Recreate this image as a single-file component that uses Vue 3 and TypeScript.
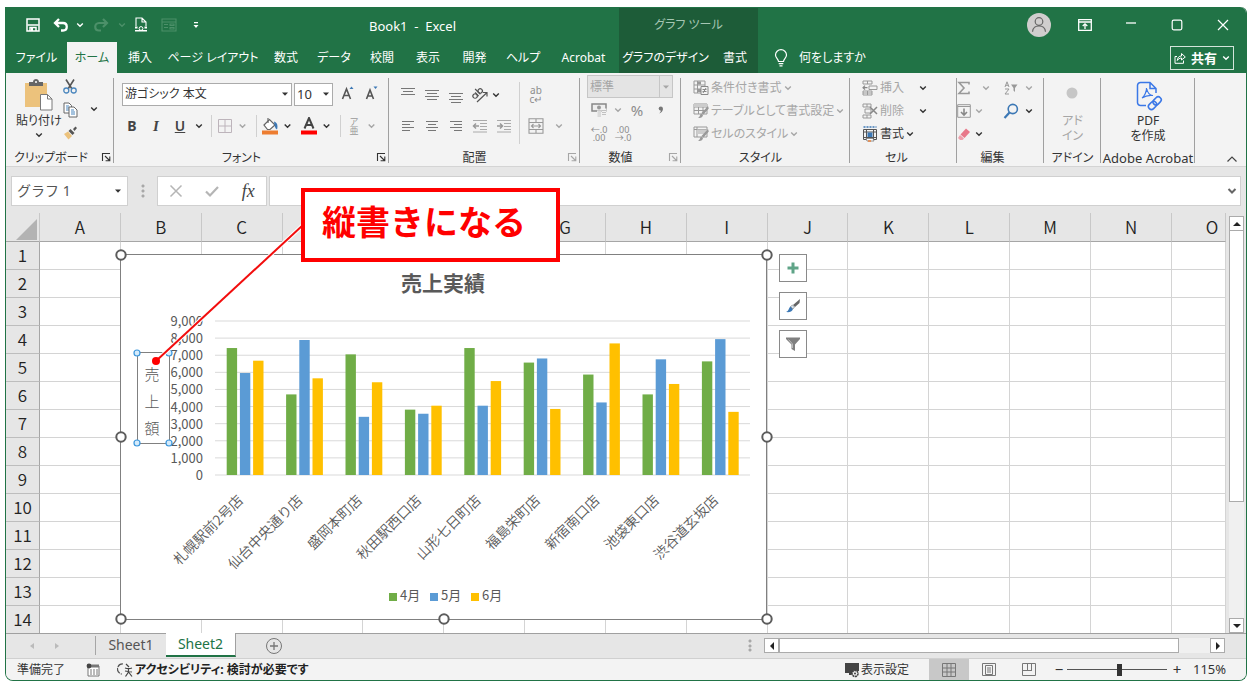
<script setup lang="ts">
import { ref } from 'vue'

interface Store {
  name: string
  values: number[]
}

const tabs = ['ファイル', 'ホーム', '挿入', 'ページ レイアウト', '数式', 'データ', '校閲', '表示', '開発', 'ヘルプ', 'Acrobat']
const contextTabs = ['グラフのデザイン', '書式']
const activeTab = ref('ホーム')

const columns = ['A', 'B', 'C', 'D', 'E', 'F', 'G', 'H', 'I', 'J', 'K', 'L', 'M', 'N', 'O']
// Columns whose letters sit under the callout
const coveredColumns = ['D', 'E', 'F']
const rowCount = 14

const stores: Store[] = [
  { name: '札幌駅前2号店', values: [7420, 5960, 6680] },
  { name: '仙台中央通り店', values: [4710, 7890, 5650] },
  { name: '盛岡本町店', values: [7050, 3400, 5420] },
  { name: '秋田駅西口店', values: [3820, 3580, 4050] },
  { name: '山形七日町店', values: [7420, 4050, 5490] },
  { name: '福島栄町店', values: [6570, 6810, 3860] },
  { name: '新宿南口店', values: [5870, 4240, 7690] },
  { name: '池袋東口店', values: [4710, 6760, 5320] },
  { name: '渋谷道玄坂店', values: [6640, 7940, 3690] },
]
const months = [
  { name: '4月', color: '#70ad47' },
  { name: '5月', color: '#5b9bd5' },
  { name: '6月', color: '#ffc000' },
]

const baseY = 475
const topY = 321
const axisMax = 9000
const groupStep = 59.4
const ticks = Array.from({ length: 10 }, (_, i) => i * 1000)
const yOf = (value: number): number => baseY - ((baseY - topY) * value) / axisMax

const frameHandles = [
  [121, 255], [444, 255], [767, 255], [121, 437], [767, 437], [121, 619], [444, 619], [767, 619],
]
const titleHandles = [[137, 353], [169, 353], [137, 443], [169, 443]]
const titleChars = ['売', '上', '額']

const fontName = ref('游ゴシック 本文')
const fontSize = ref('10')
const numberFormat = ref('標準')
const nameBox = ref('グラフ 1')
const formula = ref('')
const zoom = ref(115)
</script>

<template>
  <div class="window">
    <svg class="defs" aria-hidden="true">
      <symbol id="chev" viewBox="0 0 8 6"><path d="M1.2 1.4 4 4.2 6.8 1.4" fill="none" stroke="currentColor" stroke-width="1.4" /></symbol>
      <symbol id="tri" viewBox="0 0 8 6"><path d="M1 1.5h6L4 4.8z" fill="currentColor" /></symbol>
      <symbol id="launch" viewBox="0 0 10 10"><path d="M1.5 9V1.5H9M4 4l4.5 4.5M8.8 4.6v4.2H4.6" fill="none" stroke="currentColor" stroke-width="1.1" /></symbol>
    </svg>

    <header class="header">
      <div class="title-left">
        <div class="quick">
          <button aria-label="上書き保存"><svg width="14" height="14" viewBox="0 0 14 14"><path d="M1 1h12v12H1z" fill="none" stroke="#fff" stroke-width="1.5" /><path d="M1.500 7h11M4 13V9.500h6V13" fill="none" stroke="#fff" stroke-width="1.5" /><path d="M5 10h2v3H5z" fill="#fff" /></svg></button>
          <button aria-label="元に戻す"><svg width="16" height="14" viewBox="0 0 16 14"><path d="M6 1 2 5l4 4M2.4 5H10c5 0 5 7.5 0 7.5H8" fill="none" stroke="#fff" stroke-width="2.3" /></svg></button>
          <svg class="chev mini"><use href="#chev" /></svg>
          <button class="dim" aria-label="やり直し"><svg width="16" height="14" viewBox="0 0 16 14"><path d="m10 1 4 4-4 4M13.6 5H6c-5 0-5 7.5 0 7.5h2" fill="none" stroke="#4c9069" stroke-width="2.2" /></svg></button>
          <svg class="chev mini dim"><use href="#chev" /></svg>
          <button aria-label="印刷プレビュー"><svg width="14" height="16" viewBox="0 0 14 16"><path d="M2 9V1h6l4 4v4M8 1v4h4" fill="none" stroke="#fff" stroke-width="1.1" /><path d="M1 9.5h2.5v2H1zm9.5 0H13v2h-2.5zM1 13h12v1.5H1z" fill="#fff" /><circle cx="7" cy="11.5" r="1.9" fill="none" stroke="#fff" /></svg></button>
          <button class="dim" aria-label="フォーム"><svg width="16" height="14" viewBox="0 0 16 14"><path d="M1 1h14v12H1zM1 4h14M3 6.5h4M3 9.5h4M9 6h4v1.5H9zM9 9.5h4V11H9z" fill="none" stroke="#4c9069" stroke-width="1.1" /></svg></button>
          <button aria-label="クイック アクセスのカスタマイズ"><svg width="8" height="8" viewBox="0 0 8 8"><path d="M2 1h4v1.2H2zM1.500 4h5L4 7z" fill="#fff" /></svg></button>
        </div>
        <h1 class="title">Book1&nbsp; -&nbsp; Excel</h1>
      </div>
      <div class="context-title">グラフ ツール</div>
      <div class="controls">
        <button aria-label="アカウント"><svg width="24" height="24" viewBox="0 0 24 24"><circle cx="12" cy="12" r="12" fill="#d0cece" /><circle cx="12" cy="8.5" r="3.8" fill="none" stroke="#666" stroke-width="1.2" /><path d="M5.500 18.800c.6-8 12.400-8 13 0" fill="none" stroke="#666" stroke-width="1.2" /></svg></button>
        <button aria-label="リボンの表示オプション"><svg width="14" height="12" viewBox="0 0 14 12"><path d="M.7.7h12.600v10.600H.7zM.7 3h12.600M7 10V5M4.700 7 7 4.800 9.300 7" fill="none" stroke="#fff" stroke-width="1.3" /></svg></button>
        <button aria-label="最小化"><svg width="12" height="12" viewBox="0 0 12 12"><path d="M1 4h10" stroke="#fff" stroke-width="1.3" /></svg></button>
        <button aria-label="最大化"><svg width="12" height="12" viewBox="0 0 12 12"><rect x="1.2" y="1.2" width="9.6" height="9.6" rx="1.5" fill="none" stroke="#fff" stroke-width="1.2" /></svg></button>
        <button aria-label="閉じる"><svg width="12" height="12" viewBox="0 0 12 12"><path d="m1 1 10 10M11 1 1 11" stroke="#fff" stroke-width="1.2" /></svg></button>
      </div>

      <nav class="tabs">
        <button v-for="t in tabs" :key="t" :class="{ active: t === activeTab }" @click="activeTab = t">{{ t }}</button>
      </nav>
      <nav class="tabs context">
        <button v-for="t in contextTabs" :key="t" @click="activeTab = t">{{ t }}</button>
      </nav>
      <div class="tell">
        <svg width="14" height="18" viewBox="0 0 14 18"><path d="M4.500 12.500C4.500 10 1.500 9 1.500 6a5.500 5.300 0 0 1 11 0c0 3-3 4-3 6.500zM4.700 14.700h4.600M5.500 16.800h3" fill="none" stroke="#fff" stroke-width="1.2" /></svg>
        <button>何をしますか</button>
        <button class="share">
          <svg width="12" height="12" viewBox="0 0 12 12"><path d="M3 4.500H1v6.800h8.500V8.500M3.300 8.500C3.500 5.500 5 4 7.500 4V1.500L11.300 5 7.500 8V6C5.500 6 4.300 7 3.300 8.500z" fill="none" stroke="#fff" /></svg>
          共有
          <svg class="chev"><use href="#chev" /></svg>
        </button>
      </div>
    </header>

    <section class="ribbon">
      <div class="group clip">
        <div class="body">
          <button class="big">
            <svg width="30" height="32" viewBox="0 0 30 32"><path d="M1 4h22v24H1z" fill="#ecc27c" /><path d="M5 3h4c0-4 6-4 6 0h4v4H5z" fill="#666" /><circle cx="12" cy="3" r="1" fill="#fff" /><path d="M16.500 15.500h7l4.500 4.500v11H16.500z" fill="#fff" stroke="#7a7a7a" /><path d="M23.500 15.500V20H28" fill="none" stroke="#7a7a7a" /></svg>
            <span>貼り付け</span>
            <svg class="chev"><use href="#chev" /></svg>
          </button>
          <div class="stack">
            <button aria-label="切り取り"><svg width="14" height="15" viewBox="0 0 14 15"><path d="m3 .5 6 9.500M11 .5 5 10" stroke="#555" stroke-width="1.6" /><circle cx="3.3" cy="11.5" r="2.5" fill="none" stroke="#4a86bd" stroke-width="1.3" /><circle cx="10.7" cy="11.5" r="2.5" fill="none" stroke="#4a86bd" stroke-width="1.3" /></svg></button>
            <button aria-label="コピー"><svg width="15" height="16" viewBox="0 0 15 16"><path d="M1 1h5l2.500 2.500V11H1z" fill="#fff" stroke="#666" /><path d="M3 4h3M3 6h3M3 8h3" stroke="#4a86bd" /><path d="M6 5h5l3 3v7H6z" fill="#fff" stroke="#666" /><path d="M8 8h3M8 10h4M8 12h4" stroke="#4a86bd" /></svg></button>
            <button aria-label="書式のコピー"><svg width="14" height="14" viewBox="0 0 14 14"><path d="m1 8 4-2.500L9 10l-3.500 3.500z" fill="#ecc27c" /><path d="M5.500 5 7.500 3l4 4-2 2zM10 3l2.500-2.500L14 2l-2.500 3z" fill="#555" /></svg></button>
          </div>
          <svg class="chev copy-chev"><use href="#chev" /></svg>
        </div>
        <div class="label">クリップボード</div>
        <button class="launcher" aria-label="クリップボードの詳細"><svg width="10" height="10"><use href="#launch" /></svg></button>
      </div>

      <div class="group font">
        <div class="row combos">
          <label class="combo name"><select v-model="fontName" aria-label="フォント名"><option>游ゴシック 本文</option></select><svg class="chev"><use href="#tri" /></svg></label>
          <label class="combo size"><select v-model="fontSize" aria-label="フォント サイズ"><option>10</option></select><svg class="chev"><use href="#tri" /></svg></label>
          <button class="i24 grow" aria-label="フォント サイズの拡大"><svg width="14" height="16" viewBox="0 0 14 16"><path d="M1.500 13 5.500 3l4 10M3 9.500h5" fill="none" stroke="#555" stroke-width="1.6" /><path d="m8.500 3 2-2.500 2 2.500z" fill="#3c78b5" /></svg></button>
          <button class="i24" aria-label="フォント サイズの縮小"><svg width="14" height="16" viewBox="0 0 14 16"><path d="M1.500 13 5 4l3.500 9M2.800 10h4.500" fill="none" stroke="#555" stroke-width="1.6" /><path d="m8.500 .5 2 2.500 2-2.500z" fill="#3c78b5" /></svg></button>
        </div>
        <div class="row tools">
          <button class="i24 glyph"><b>B</b></button>
          <button class="i24 glyph serif"><i>I</i></button>
          <button class="i24 glyph"><u>U</u></button>
          <svg class="chev w14"><use href="#chev" /></svg>
          <span class="sep"></span>
          <button class="i18" aria-label="罫線"><svg width="14" height="14" viewBox="0 0 14 14"><path d="M.5.5h13v13H.5zM7 1v12M1 7h12" fill="none" stroke="#bdb4bb" /></svg></button>
          <svg class="chev w17 off"><use href="#chev" /></svg>
          <span class="sep"></span>
          <button class="i18" aria-label="塗りつぶしの色"><svg width="18" height="18" viewBox="0 0 18 18"><path d="m3 8 5.500-5.500L14 8l-5 4.500H6.500z" fill="#fff" stroke="#666" stroke-width="1.2" /><path d="M7 1v5" stroke="#666" stroke-width="1.2" /><path d="M13 4.500c3.500 1 4 4.500 3 8-2-1-2.500-4-3-8z" fill="#3c78b5" /><path d="M1 13.500h16v4H1z" fill="#ed7d31" /></svg></button>
          <svg class="chev w17"><use href="#chev" /></svg>
          <button class="i18 fore" aria-label="フォントの色"><svg width="18" height="18" viewBox="0 0 18 18"><path d="M4.500 11.500 9 1l4.500 10.500M6 8h6" fill="none" stroke="#444" stroke-width="2" /><path d="M1 13.500h16v4H1z" fill="#f00" /></svg></button>
          <svg class="chev w17"><use href="#chev" /></svg>
          <span class="sep"></span>
          <button class="i18 ruby"><span>ア</span><span>亜</span></button>
          <svg class="chev w17 off"><use href="#chev" /></svg>
        </div>
        <div class="label">フォント</div>
        <button class="launcher" aria-label="フォントの詳細"><svg width="10" height="10"><use href="#launch" /></svg></button>
      </div>

      <div class="group align">
        <div class="body">
          <div class="align-grid">
            <button aria-label="上揃え"><svg width="16" height="16" viewBox="0 0 16 16"><path d="M1 1.500h14M3 4.500h10M1 7.500h14" stroke="#777" /></svg></button>
            <button aria-label="上下中央揃え"><svg width="16" height="16" viewBox="0 0 16 16"><path d="M1 3.500h14M3 6.500h10M1 9.500h14M3 12.500h10" stroke="#777" /></svg></button>
            <button aria-label="下揃え"><svg width="16" height="16" viewBox="0 0 16 16"><path d="M1 6.500h14M3 9.500h10M1 12.500h14M3 15.500h10" stroke="#777" /></svg></button>
            <button aria-label="方向"><svg width="16" height="16" viewBox="0 0 16 16"><g transform="rotate(-45 7 8)" fill="none" stroke="#555" stroke-width="1.2"><circle cx="3.5" cy="6" r="2.2" /><path d="M6 3.500v5M8.500 1v7.500" /><circle cx="10.7" cy="6" r="2.2" /></g><path d="M5 15 14.500 6M11 5.500h4v4" fill="none" stroke="#555" stroke-width="1.2" /></svg></button>
            <svg class="chev"><use href="#chev" /></svg>
            <button aria-label="左揃え"><svg width="14" height="14" viewBox="0 0 14 14"><path d="M1 2.500h12M1 5.500h8M1 8.500h12M1 11.500h8" stroke="#777" /></svg></button>
            <button aria-label="中央揃え"><svg width="14" height="14" viewBox="0 0 14 14"><path d="M1 2.500h12M3 5.500h8M1 8.500h12M3 11.500h8" stroke="#777" /></svg></button>
            <button aria-label="右揃え"><svg width="14" height="14" viewBox="0 0 14 14"><path d="M1 2.500h12M5 5.500h8M1 8.500h12M5 11.500h8" stroke="#777" /></svg></button>
            <button aria-label="インデントを減らす"><svg width="16" height="14" viewBox="0 0 16 14"><path d="M1 1.500h14M8 4.500h7M8 7.500h7M8 10.500h7M1 13h14" stroke="#aaa" /><path d="M7 7H1.500M4 4.500 1.500 7 4 9.500" fill="none" stroke="#999" stroke-width="1.5" /></svg></button>
            <button aria-label="インデントを増やす"><svg width="16" height="14" viewBox="0 0 16 14"><path d="M1 1.500h14M8 4.500h7M8 7.500h7M8 10.500h7M1 13h14" stroke="#aaa" /><path d="M1 7h5.500M4 4.500 6.500 7 4 9.500" fill="none" stroke="#999" stroke-width="1.5" /></svg></button>
          </div>
          <div class="wrap-grid">
            <button class="wraptext" aria-label="折り返して全体を表示する"><span>ab</span><span>c↵</span></button>
            <span></span>
            <button aria-label="セルを結合して中央揃え"><svg width="16" height="16" viewBox="0 0 16 16"><path d="M1 .7h14v14.600H1zM1 4.500h14M1 11.500h14M8 .7v3.800M8 11.500v3.800M3.500 8h9M5.500 6 3.500 8l2 2M10.500 6l2 2-2 2" fill="none" stroke="#999" stroke-width="1.1" /></svg></button>
            <svg class="chev off"><use href="#chev" /></svg>
          </div>
        </div>
        <div class="label">配置</div>
        <button class="launcher off" aria-label="配置の詳細"><svg width="10" height="10"><use href="#launch" /></svg></button>
      </div>

      <div class="group number">
        <label class="combo format"><select v-model="numberFormat" disabled aria-label="表示形式"><option>標準</option></select><svg class="chev"><use href="#tri" /></svg></label>
        <div class="row">
          <button class="i24" aria-label="通貨表示形式"><svg width="16" height="16" viewBox="0 0 16 16"><path d="M1 2h14v7H1z" fill="#eee" stroke="#888" stroke-width="1.5" /><circle cx="8" cy="5.5" r="2" fill="#999" /><path d="M6 8.500h4v6H6zM10.500 6.500h5v8h-5z" fill="#f3f3f3" /><path d="M6.500 10h3.500M6.500 12h3.500M6.500 14h3.500M11 8.500h4M11 10.500h4M11 12.500h4" stroke="#c2c2c2" /></svg></button>
          <svg class="chev w14 off"><use href="#chev" /></svg>
          <button class="i24 percent">%</button>
          <button class="i24 comma" aria-label="桁区切りスタイル"><svg width="6" height="8" viewBox="0 0 6 8"><circle cx="2.8" cy="2.6" r="2.1" fill="#777" /><path d="M4.900 2.500C5 5 3.500 6.800 1.200 7.500c1-1 1.700-2 1.800-3.200z" fill="#777" /></svg></button>
        </div>
        <div class="row decimals">
          <button class="i24 dec"><span>←.0</span><span>.00</span></button>
          <button class="i24 dec"><span>.00</span><span>→.0</span></button>
        </div>
        <div class="label">数値</div>
        <button class="launcher off" aria-label="数値の詳細"><svg width="10" height="10"><use href="#launch" /></svg></button>
      </div>

      <div class="group style">
        <div class="list off">
          <button><svg width="16" height="16" viewBox="0 0 16 16"><path d="M1 1h11v12H1zM4.500 1v12M1 5h11M1 9h11" fill="none" stroke="#999" /><path d="M5 1.500h3v3H5zM5 9h4v3H5z" fill="#999" /><path d="M8 6.500h7v8H8z" fill="#f3f3f3" stroke="#888" /><path d="M9.500 9.500h4M9.500 11.500h4M13 8l-3 5" stroke="#888" /></svg>条件付き書式<svg class="chev"><use href="#chev" /></svg></button>
          <button><svg width="16" height="16" viewBox="0 0 16 16"><path d="M1 1h13v10H1zM5.500 1v10M10 1v10M1 4h13M1 7.500h13" fill="none" stroke="#999" /><path d="M1 1h13v3H1z" fill="#ccc" /><path d="m15 3 .8 2.500-5.300 6-2-1.500zM8 10.500l2 1.500c-.5 3-3 3-5 3 2-1 2-3.500 3-4.500z" fill="#999" /></svg>テーブルとして書式設定<svg class="chev"><use href="#chev" /></svg></button>
          <button><svg width="16" height="16" viewBox="0 0 16 16"><path d="M1 1h13v10H1zM1 3.500h13M4 1v10" fill="none" stroke="#999" /><path d="M4 3.500h10V8H4z" fill="#ccc" /><path d="m15 3 .8 2.500-5.300 6-2-1.500zM8 10.500l2 1.500c-.5 3-3 3-5 3 2-1 2-3.500 3-4.500z" fill="#999" /></svg>セルのスタイル<svg class="chev"><use href="#chev" /></svg></button>
        </div>
        <div class="label">スタイル</div>
      </div>

      <div class="group cells">
        <div class="list">
          <button class="off"><svg width="16" height="16" viewBox="0 0 16 16"><path d="M1 1h9v3H1zM1 11h9v4H1zM5.500 1v3M5.500 11v4M1 13h9M7 6h8v3.500H7z" fill="none" stroke="#999" /><path d="M5.500 7.700H1M3 5.700l-2 2 2 2" fill="none" stroke="#888" stroke-width="1.2" /></svg>挿入<svg class="chev far"><use href="#chev" /></svg></button>
          <button class="off"><svg width="16" height="16" viewBox="0 0 16 16"><path d="M1 1h8v3H1zM1 12h8v3H1zM5 1v3M5 12v3M3 6h6v4H3z" fill="none" stroke="#999" /><path d="m8 4 7 7M15 4l-7 7" stroke="#888" stroke-width="1.5" /></svg>削除<svg class="chev far"><use href="#chev" /></svg></button>
          <button><svg width="16" height="16" viewBox="0 0 16 16"><path d="M1.500 1h13" fill="none" stroke="#3c78b5" stroke-width="1.6" stroke-dasharray="2 1" /><path d="M1.500 3.500h13v10h-13zM4.500 3.500v10M11.500 3.500v10M1.500 6h13M1.500 11.500h13" fill="none" stroke="#555" /><path d="M5.500 6.500h5v4.500h-5z" fill="#3c78b5" /><path d="M4 12.500h7l1 2.500H5z" fill="#fff" stroke="#777" stroke-width=".8" /><path d="M6 15h3" stroke="#ed7d31" stroke-width="1.4" fill="none" /></svg>書式<svg class="chev"><use href="#chev" /></svg></button>
        </div>
        <div class="label">セル</div>
      </div>

      <div class="group edit">
        <div class="edit-grid">
          <button aria-label="オート SUM"><svg width="14" height="14" viewBox="0 0 14 14"><path d="M12 3.500V1.500H2L7 7l-5 5.500h10v-2" fill="none" stroke="#999" stroke-width="1.6" /></svg></button>
          <svg class="chev off sum"><use href="#chev" /></svg>
          <button aria-label="並べ替えとフィルター"><svg width="14" height="14" viewBox="0 0 14 14"><path d="M1 6 3 .8 5 6M1.700 4.300h2.600M1 8h4l-4 5h4" fill="none" stroke="#999" /><path d="M7 3.500h6.500L11 7v4L9.500 9.500V7z" fill="#999" /></svg></button>
          <svg class="chev off"><use href="#chev" /></svg>
          <button aria-label="フィル"><svg width="14" height="14" viewBox="0 0 14 14"><path d="M.7.7h12.600v12.600H.7zM.7 2.500h12.600" fill="none" stroke="#999" /><path d="M7 4.500v6.500M4 8l3 3 3-3" fill="none" stroke="#888" stroke-width="1.6" /></svg></button>
          <svg class="chev off"><use href="#chev" /></svg>
          <button aria-label="検索と選択"><svg width="16" height="16" viewBox="0 0 16 16"><circle cx="9.8" cy="6" r="4.6" fill="none" stroke="#3c78b5" stroke-width="1.6" /><path d="m6.500 9.500-5 5.500" stroke="#3c78b5" stroke-width="2.2" /></svg></button>
          <svg class="chev"><use href="#chev" /></svg>
          <button aria-label="クリア"><svg width="14" height="14" viewBox="0 0 14 14"><path d="M9 1.500 13 5l-5.500 6-4-3.500z" fill="#e8788a" /><path d="m3 8 4 3.500-1.500 1.500H3L1 11z" fill="#ef9fab" /></svg></button>
          <svg class="chev"><use href="#chev" /></svg>
        </div>
        <div class="label">編集</div>
      </div>

      <div class="group addin">
        <button class="big off">
          <svg width="30" height="32" viewBox="0 0 30 32"><circle cx="14" cy="14" r="5.5" fill="#c6c6c6" /></svg>
          <span>アド</span><span>イン</span>
        </button>
        <div class="label">アドイン</div>
      </div>

      <div class="group acrobat">
        <button class="big">
          <svg width="30" height="32" viewBox="0 0 30 32"><path d="M13 26.500H7.500a3 3 0 0 1-3-3v-17a3 3 0 0 1 3-3H17l6 6V14M17 3.500v6h6" fill="none" stroke="#3b78e7" stroke-width="1.5" /><path d="M9 19c2-1 5-7 4.500-10 1 5 3 7.500 6.500 7.500-4-.5-8 .5-11 2.500z" fill="none" stroke="#3b78e7" stroke-width="1.2" /><g transform="rotate(-45 22 24)" fill="none" stroke="#3b78e7" stroke-width="1.6"><rect x="14" y="21" width="9" height="6" rx="3" /><rect x="20.5" y="21" width="9" height="6" rx="3" /></g></svg>
          <span>PDF</span><span>を作成</span>
        </button>
        <div class="label">Adobe Acrobat</div>
      </div>

      <button class="collapse" aria-label="リボンを折りたたむ"><svg width="12" height="8" viewBox="0 0 12 8"><path d="m1.500 6.500 4.500-4.500 4.500 4.500" fill="none" stroke="#444" stroke-width="1.2" /></svg></button>
    </section>

    <section class="formula">
      <div class="box namebox">
        <input v-model="nameBox" aria-label="名前ボックス" />
        <svg class="chev"><use href="#tri" /></svg>
      </div>
      <span class="dots"></span>
      <div class="box fx">
        <button aria-label="キャンセル"><svg width="14" height="14" viewBox="0 0 14 14"><path d="m1.500 1.500 11 11M12.500 1.500l-11 11" stroke="#b5b5b5" stroke-width="1.5" /></svg></button>
        <button aria-label="入力"><svg width="14" height="14" viewBox="0 0 14 14"><path d="m1 7.500 4 4L13 3" fill="none" stroke="#b5b5b5" stroke-width="2.2" /></svg></button>
        <button class="fn"><i>fx</i></button>
      </div>
      <div class="box entry">
        <input v-model="formula" aria-label="数式バー" />
        <svg width="10" height="8" viewBox="0 0 10 8"><path d="m1.500 2 3.500 3.500L8.500 2" fill="none" stroke="#666" stroke-width="2" /></svg>
      </div>
    </section>

    <main class="sheet">
      <div class="grid">
        <table>
          <colgroup>
            <col class="c-head" />
            <col v-for="c in columns" :key="c" :class="{ 'c-last': c === 'O' }" />
          </colgroup>
          <thead>
            <tr>
              <th class="corner"><svg width="22" height="21" viewBox="0 0 22 21"><path d="M21 0v21H0z" fill="#b3b3b3" /></svg></th>
              <th v-for="c in columns" :key="c" scope="col">{{ coveredColumns.includes(c) ? '' : c }}</th>
            </tr>
          </thead>
          <tbody>
            <tr v-for="r in rowCount" :key="r">
              <th scope="row">{{ r }}</th>
              <td v-for="c in columns" :key="c"></td>
            </tr>
          </tbody>
        </table>

        <svg class="chart" viewBox="113 247 662 380" role="img" aria-label="売上実績">
          <rect x="120.5" y="254.5" width="646" height="365" fill="#fff" stroke="#808080" />
          <text x="443" y="291" class="c-title">売上実績</text>
          <g v-for="t in ticks" :key="t">
            <line x1="215" x2="750" :y1="yOf(t)" :y2="yOf(t)" stroke="#d9d9d9" />
            <text x="203" :y="yOf(t) + 5" class="c-tick">{{ t.toLocaleString('en-US') }}</text>
          </g>
          <g v-for="(s, i) in stores" :key="s.name">
            <rect
              v-for="(v, j) in s.values"
              :key="j"
              :x="226.7 + i * groupStep + j * 13.2"
              :y="yOf(v)"
              width="10.4"
              :height="baseY - yOf(v)"
              :fill="months[j].color"
            />
            <text class="c-cat" :transform="`translate(${244 + i * groupStep} 501) rotate(-45)`">{{ s.name }}</text>
          </g>
          <g v-for="(m, i) in months" :key="m.name">
            <rect :x="389 + i * 41" y="593" width="8" height="8" :fill="m.color" />
            <text :x="400 + i * 41" y="600" class="c-legend">{{ m.name }}</text>
          </g>
          <rect x="137.5" y="352.5" width="32" height="91" fill="none" stroke="#808080" />
          <text v-for="(ch, i) in titleChars" :key="ch" x="152" :y="380 + i * 27" class="c-axis">{{ ch }}</text>
          <circle v-for="(p, i) in titleHandles" :key="'t' + i" :cx="p[0]" :cy="p[1]" r="3" fill="#d5ebfb" stroke="#3d97dc" stroke-width="1.2" />
          <circle v-for="(p, i) in frameHandles" :key="'f' + i" :cx="p[0]" :cy="p[1]" r="4.7" fill="#fff" stroke="#5c5c5c" stroke-width="2" />
        </svg>

        <div class="chart-tools">
          <button aria-label="グラフ要素"><svg width="14" height="14" viewBox="0 0 14 14"><path d="M5.500 1.500h3v4h4v3h-4v4h-3v-4h-4v-3h4z" fill="#5fa487" /></svg></button>
          <button aria-label="グラフ スタイル"><svg width="16" height="16" viewBox="0 0 16 16"><path d="m15 1-.5 4-4.500 4-2-2z" fill="#666" /><path d="M1 14c3-1 2.500-4 4.500-5.500L8 11c-1 3-4 3.500-7 3z" fill="#3c78b5" /><path d="m5.500 8.500 2-1.500 2 2L8 11z" fill="#d5e3ef" stroke="#777" stroke-width=".6" /></svg></button>
          <button aria-label="グラフ フィルター"><svg width="16" height="16" viewBox="0 0 16 16"><path d="M1 1.500h14v1.500L10 8.500V15l-3.500-2V8.500L1 3z" fill="#808080" /><path d="M3.500 3.500 7.500 8v4" fill="none" stroke="#ccc" stroke-width=".8" /></svg></button>
        </div>
      </div>

      <div class="vscroll">
        <button aria-label="上へ"><svg width="8" height="6" viewBox="0 0 8 6"><path d="M0 5h8L4 1z" fill="#222" /></svg></button>
        <div class="v-thumb"></div>
        <div class="v-track"></div>
        <button aria-label="下へ"><svg width="8" height="6" viewBox="0 0 8 6"><path d="M0 1h8L4 5z" fill="#222" /></svg></button>
      </div>
    </main>

    <section class="sheetbar">
      <div class="sheet-nav">
        <button aria-label="前のシート"><svg width="6" height="8" viewBox="0 0 6 8"><path d="M5 1v6L1 4z" fill="#bbb" /></svg></button>
        <button aria-label="次のシート"><svg width="6" height="8" viewBox="0 0 6 8"><path d="M1 1v6l4-3z" fill="#bbb" /></svg></button>
      </div>
      <button class="sheet-tab">Sheet1</button>
      <button class="sheet-tab current">Sheet2</button>
      <button class="add" aria-label="新しいシート"><svg width="18" height="18" viewBox="0 0 18 18"><circle cx="9" cy="9" r="7.5" fill="none" stroke="#777" /><path d="M9 5v8M5 9h8" stroke="#777" stroke-width="1.3" /></svg></button>
      <span class="dots"></span>
      <div class="hscroll">
        <button aria-label="左へ"><svg width="6" height="8" viewBox="0 0 6 8"><path d="M5 0v8L1 4z" fill="#222" /></svg></button>
        <div class="h-thumb"></div>
        <div class="h-track"></div>
        <button aria-label="右へ"><svg width="6" height="8" viewBox="0 0 6 8"><path d="M1 0v8l4-4z" fill="#222" /></svg></button>
      </div>
    </section>

    <footer class="status">
      <span class="ready">準備完了</span>
      <button class="macro" aria-label="マクロの記録"><svg width="14" height="14" viewBox="0 0 14 14"><path d="M2 3h11v10H2z" fill="#fff" stroke="#777" /><path d="M2 1.500h11v3H2z" fill="#777" /><circle cx="3" cy="3" r="2.4" fill="#444" /><path d="M4 7h8M4 9h8M4 11h8" stroke="#777" stroke-dasharray="2 1" /></svg></button>
      <button class="access"><svg width="16" height="16" viewBox="0 0 16 16"><path d="M6 2a5 5 0 0 0-1 10" fill="none" stroke="#555" stroke-width="1.2" stroke-dasharray="6 1" /><path d="m9 2 3 3M8 6c3 1 4 1 7 0M11.500 7v3l-3 4.500M11.500 10l3.500 4.500M8 9l7 1" fill="none" stroke="#444" stroke-width="1.2" /></svg>アクセシビリティ: 検討が必要です</button>
      <button class="display"><svg width="16" height="16" viewBox="0 0 16 16"><path d="M1 1h14v8h-4l-4 4H5v-2H1z" fill="#444" /><circle cx="11" cy="11.5" r="3" fill="#f3f3f3" stroke="#444" stroke-width="1.6" stroke-dasharray="2 .6" /><circle cx="11" cy="11.5" r="1" fill="#444" /></svg>表示設定</button>
      <button class="view on" aria-label="標準"><svg width="14" height="14" viewBox="0 0 14 14"><path d="M.5.5h13v13H.5zM5 1v12M9 1v12M1 5h12M1 9h12" fill="none" stroke="#777" /></svg></button>
      <button class="view" aria-label="ページ レイアウト"><svg width="14" height="14" viewBox="0 0 14 14"><path d="M.5.5h13v12H.5zM3.500 2.500h7v9h-7zM5 5h4M5 7h4M5 9h4" fill="none" stroke="#777" /></svg></button>
      <button class="view" aria-label="改ページ プレビュー"><svg width="14" height="14" viewBox="0 0 14 14"><path d="M.5.5h13v12H.5zM5.500 1v7M9.500 1v7M1 7.500h9" fill="none" stroke="#777" /></svg></button>
      <button class="step" aria-label="縮小">−</button>
      <input v-model.number="zoom" class="slider" type="range" min="10" max="210" aria-label="ズーム" />
      <button class="step" aria-label="拡大">+</button>
      <output class="percent-out">{{ zoom }}%</output>
    </footer>

    <svg class="leader" viewBox="150 220 160 150" aria-hidden="true">
      <path d="M156 361 303 225" stroke="#fff" stroke-width="4" />
      <path d="M156 361 303 225" stroke="#f20d0d" stroke-width="2" />
      <circle cx="156" cy="361" r="4" fill="#f00" />
    </svg>
    <div class="callout">縦書きになる</div>
  </div>
</template>

<style>
html,
body {
  margin: 0;
  background: #fff;
}
</style>

<style scoped>
.window {
  position: relative;
  box-sizing: border-box;
  margin: 7px 7px 6px 5px;
  border: 1px solid #217346;
  border-top: 0;
  border-radius: 0 6px 8px 8px;
  background: #e6e6e6;
  color: #333;
  font-family: "Noto Sans", "Noto Sans CJK JP", sans-serif;
  font-size: 12px;
  line-height: 16px;
  font-feature-settings: "palt";
}
.window * {
  box-sizing: border-box;
}
.defs {
  position: absolute;
  width: 0;
  height: 0;
}
svg {
  display: block;
  flex: none;
}
button,
select,
input {
  margin: 0;
  padding: 0;
  border: 0;
  border-radius: 0;
  background: none;
  color: inherit;
  font: inherit;
  font-feature-settings: inherit;
}
button {
  display: flex;
  align-items: center;
  justify-content: center;
  white-space: nowrap;
}
.chev {
  width: 8px;
  height: 6px;
  color: #333;
}
.off,
.off .chev {
  color: #a6a6a6;
}

/* Title bar and tabs */
.header {
  display: grid;
  grid-template-columns: 613px 139px 1fr;
  grid-template-rows: 35px 31px;
  background: #217346;
  color: #fff;
  border-radius: 0 6px 0 0;
}
.header .chev {
  color: #fff;
}
.title-left {
  display: flex;
  align-items: center;
}
.quick {
  display: grid;
  grid-template-columns: 24px 32px 6px 36px 6px 32px 24px 30px;
  align-items: center;
  justify-items: center;
  width: 208px;
  padding-left: 15px;
}
.header .dim {
  color: #4c9069;
}
.title {
  flex: 1;
  margin: 3px 0 0;
  padding-left: 155px;
  font-size: 13px;
  font-weight: 400;
  line-height: 20px;
}
.context-title {
  display: flex;
  align-items: center;
  justify-content: center;
  margin-top: 1px;
  background: #1d5c38;
  color: #a5c6b3;
}
.controls {
  display: grid;
  grid-template-columns: 48px 44px 47px 45px 47px;
  justify-content: end;
  align-items: center;
}
.tabs {
  display: grid;
  grid-template-columns: 61px 50px 46px 100px 46px 50px 46px 46px 47px 50px 71px;
}
.tabs.context {
  grid-template-columns: 93px 46px;
  background: #1d5c38;
}
.tabs .active {
  background: #f3f3f3;
  color: #217346;
}
.tell {
  display: flex;
  align-items: center;
  gap: 11px;
  padding: 0 12px 0 16px;
}
.share {
  gap: 5px;
  height: 24px;
  margin-left: auto;
  padding: 0 3px;
  border: 1px solid #d4e4da;
  font-size: 13px;
  font-weight: 700;
}

/* Ribbon */
.ribbon {
  display: grid;
  grid-template-columns: 108px 275px 191px 101px 169px 107px 87px 57px 94px 1fr;
  height: 94px;
  border-bottom: 1px solid #d4d4d4;
  background: #f3f3f3;
}
.group {
  position: relative;
  display: flex;
  flex-direction: column;
  background: linear-gradient(#a0a0a0, #a0a0a0) right 5px / 1px 85px no-repeat;
}
.label {
  margin-top: auto;
  padding: 0 20px 0 0;
  text-align: center;
  white-space: nowrap;
}
.launcher {
  position: absolute;
  right: 3px;
  bottom: 4px;
}
.row,
.body {
  display: flex;
  align-items: center;
}
.i24 {
  width: 24px;
  height: 24px;
}
.i18 {
  width: 18px;
  height: 24px;
}
.w14 {
  width: 14px;
}
.w17 {
  width: 17px;
}
.sep {
  width: 10px;
  height: 22px;
  background: linear-gradient(#d0d0d0, #d0d0d0) center / 1px 100% no-repeat;
}
.big {
  flex-direction: column;
}
.big svg:first-child {
  margin-bottom: 2px;
}
.clip .body {
  align-items: start;
  padding: 6px 0 0 10px;
}
.clip .label {
  padding-right: 18px;
}
.clip .big .chev {
  margin-top: 3px;
}
.stack {
  display: grid;
  grid-template-rows: repeat(3, 23px);
  margin: -4px 0 0 1px;
}
.copy-chev {
  margin: 27px 0 0 12px;
}
.combo {
  display: flex;
  align-items: center;
  height: 23px;
  border: 1px solid #ababab;
  background: #fff;
}
.combo select {
  flex: 1;
  min-width: 0;
  appearance: none;
  padding-left: 2px;
  opacity: 1;
}
.combo .chev {
  margin-right: 2px;
}
.combo.name {
  width: 170px;
}
.combo.size {
  width: 39px;
  margin-left: 2px;
}
.combo.size select {
  font-size: 13px;
}
.combos {
  padding: 9px 0 0 8px;
}
.grow {
  margin-left: 3px;
}
.tools {
  padding: 8px 0 0 6px;
}
.glyph {
  color: #444;
  font-size: 14px;
}
.glyph u {
  font-weight: 600;
}
.serif {
  font-family: "Liberation Serif", serif;
  font-weight: 700;
  font-size: 15px;
}
.fore {
  margin-left: 4px;
}
.ruby {
  flex-direction: column;
  color: #999;
  font-size: 9px;
  line-height: 9px;
}
.align .body {
  padding: 9px 0 0 7px;
}
.align-grid {
  display: grid;
  grid-template-columns: repeat(5, 24px);
  grid-template-rows: 25px 37px;
  align-items: center;
  width: 124px;
  border-right: 1px solid #d0d0d0;
}
.wrap-grid {
  display: grid;
  grid-template-columns: 32px 14px;
  grid-template-rows: 25px 37px;
  align-items: center;
  justify-items: center;
}
.wraptext,
.dec {
  flex-direction: column;
  color: #8c8c8c;
  font-size: 10px;
  line-height: 9px;
}
.dec {
  font-size: 9px;
  line-height: 8px;
}
.number {
  padding: 2px 7px 0;
}
.combo.format {
  width: 86px;
  border-color: #c6c6c6;
  background: #e4e4e4;
}
.combo.format select {
  height: 21px;
  border-right: 1px solid #c6c6c6;
  color: #a6a6a6;
}
.combo.format .chev {
  margin-left: 2px;
  color: #a6a6a6;
}
.percent {
  color: #8c8c8c;
  font-size: 15px;
}
.list {
  display: grid;
  grid-template-rows: repeat(3, 23px);
  justify-items: start;
  padding: 3px 0 0 12px;
}
.list button {
  gap: 2px;
}
.cells .far {
  margin-left: 13px;
  color: #333;
}
.cells .label {
  padding-right: 14px;
}
.style .label,
.edit .label {
  padding-right: 10px;
}
.edit .label {
  padding-right: 16px;
}
.edit-grid {
  display: grid;
  grid-template-columns: 14px 30px 20px 14px;
  grid-template-rows: repeat(3, 23px);
  align-items: center;
  padding: 3px 0 0;
}
.edit-grid .chev {
  margin-left: 4px;
}
.edit-grid .sum {
  margin-left: 11px;
}
.addin .label,
.acrobat .label {
  padding-right: 0;
}
.acrobat .label {
  font-size: 13px;
}
.addin .big,
.acrobat .big {
  padding-top: 6px;
  line-height: 15px;
}
.collapse {
  align-self: end;
  justify-self: end;
  width: 28px;
  height: 14px;
}

/* Formula bar */
.formula {
  display: flex;
  padding: 9px 5px 7px;
}
.box {
  display: flex;
  align-items: center;
  height: 30px;
  border: 1px solid #d0d0d0;
  background: #fff;
}
.box input {
  flex: 1;
  min-width: 0;
  outline: none;
}
.namebox {
  width: 117px;
  padding: 0 5px;
  color: #555;
  font-size: 14px;
  font-feature-settings: normal;
}
.dots {
  width: 29px;
  background: radial-gradient(circle, #a8a8a8 1px, transparent 2px) center / 4px 4px no-repeat, radial-gradient(circle, #a8a8a8 1px, transparent 2px) center 30% / 4px 4px no-repeat, radial-gradient(circle, #a8a8a8 1px, transparent 2px) center 70% / 4px 4px no-repeat;
}
.fx {
  width: 110px;
  justify-content: space-around;
}
.fn {
  color: #444;
  font-family: "Liberation Serif", serif;
  font-size: 18px;
}
.entry {
  flex: 1;
  margin-left: 2px;
  padding: 0 3px;
}

/* Sheet */
.sheet {
  display: flex;
}
.grid {
  position: relative;
  flex: 1;
  min-width: 0;
}
table {
  width: 100%;
  table-layout: fixed;
  border-collapse: separate;
  border-spacing: 0;
  background: #fff;
  font-family: "Noto Sans CJK JP", sans-serif;
  font-size: 17px;
  line-height: 20px;
}
.c-head {
  width: 34px;
}
.c-last {
  width: 54px;
}
th {
  padding: 0 0 2px;
  background: #e6e6e6;
  color: #222;
  font-weight: 350;
}
thead th {
  height: 29px;
  padding-bottom: 0;
  border-right: 1px solid #c8c8c8;
  border-bottom: 1px solid #a6a6a6;
}
thead th:last-child {
  padding-left: 27px;
}
thead .corner svg {
  margin: 4px 0 0 10px;
}
tbody th,
td {
  height: 28px;
  border-right: 1px solid #d4d4d4;
  border-bottom: 1px solid #d4d4d4;
}
tbody th {
  border-right-color: #a6a6a6;
  border-bottom-color: #bdbdbd;
}
td {
  padding: 0;
}
tbody tr:last-child th,
tbody tr:last-child td {
  height: 27px;
  border-bottom: 0;
}
.chart {
  position: absolute;
  left: 107px;
  top: 34px;
  width: 662px;
  height: 380px;
}
.chart text {
  fill: #595959;
  font-family: "Noto Sans CJK JP", sans-serif;
  font-feature-settings: normal;
}
.chart .c-title {
  font-size: 21px;
  font-weight: 700;
  text-anchor: middle;
}
.chart .c-tick {
  font-size: 13px;
  text-anchor: end;
}
.chart .c-cat {
  font-size: 14px;
  font-weight: 350;
  text-anchor: end;
}
.chart .c-legend {
  font-size: 13px;
}
.chart .c-axis {
  font-size: 15px;
  font-weight: 300;
  text-anchor: middle;
}
.chart-tools {
  position: absolute;
  left: 773px;
  top: 41px;
  display: grid;
  gap: 10px;
}
.chart-tools button {
  width: 28px;
  height: 28px;
  border: 1px solid #8a8a8a;
  background: #fff;
}
.vscroll {
  display: flex;
  flex-direction: column;
  width: 20px;
  padding: 3px 2px 0 3px;
}
.vscroll button,
.hscroll button {
  width: 15px;
  height: 15px;
  border: 1px solid #ababab;
  background: #fff;
}
.v-thumb {
  flex: 271;
  border: 1px solid #ababab;
  border-top: 0;
  background: #fff;
}
.v-track {
  flex: 117;
  background: #f0f0f0;
}

/* Sheet tabs */
.sheetbar {
  display: flex;
  height: 26px;
  border-bottom: 1px solid #d0d0d0;
  background: linear-gradient(#a0a0a0, #a0a0a0) top / 100% 1px no-repeat;
}
.sheet-nav {
  display: grid;
  grid-template-columns: 25px 25px;
  justify-content: center;
  width: 90px;
  padding-right: 13px;
  background: linear-gradient(#a6a6a6, #a6a6a6) right 3px / 1px 19px no-repeat;
}
.sheet-tab {
  width: 70px;
  height: 24px;
  color: #555;
  font-size: 14px;
}
.sheet-tab.current {
  border-right: 1px solid #a0a0a0;
  border-bottom: 2px solid #217346;
  background: #fff;
  color: #217346;
}
.add {
  width: 76px;
}
.sheetbar .dots {
  margin-left: auto;
}
.hscroll {
  display: flex;
  align-items: center;
  width: 461px;
  margin-right: 21px;
}
.h-thumb {
  flex: 400;
  height: 15px;
  border: 1px solid #ababab;
  background: #fff;
}
.h-track {
  flex: 31;
  height: 15px;
  background: #f0f0f0;
}

/* Status bar */
.status {
  display: flex;
  align-items: stretch;
  height: 21px;
  border-radius: 0 0 7px 7px;
  background: #f3f3f3;
  line-height: 21px;
}
.ready {
  width: 80px;
  padding-left: 11px;
}
.access {
  gap: 2px;
  margin-left: 17px;
  color: #222;
  font-weight: 700;
}
.display {
  gap: 1px;
  margin-left: auto;
  padding-right: 20px;
}
.view {
  width: 40px;
}
.view.on {
  background: #c8c8c8;
}
.step {
  width: 16px;
  margin-left: 2px;
  font-size: 15px;
}
.slider {
  appearance: none;
  width: 100px;
  height: 21px;
  background: linear-gradient(#555, #555) center / 100% 1px no-repeat;
}
.slider::-webkit-slider-thumb {
  appearance: none;
  width: 5px;
  height: 12px;
  background: #333;
}
.percent-out {
  width: 61px;
  padding-left: 8px;
  font-size: 13px;
}

/* Callout */
.leader {
  position: absolute;
  left: 144px;
  top: 213px;
  width: 160px;
  height: 150px;
}
.callout {
  position: absolute;
  left: 295px;
  top: 181px;
  padding: 5px 30px 11px 17px;
  border: 4px solid #f00;
  background: #fff;
  color: #f00;
  font-size: 34px;
  font-weight: 700;
  line-height: 50px;
  font-feature-settings: normal;
}
</style>
